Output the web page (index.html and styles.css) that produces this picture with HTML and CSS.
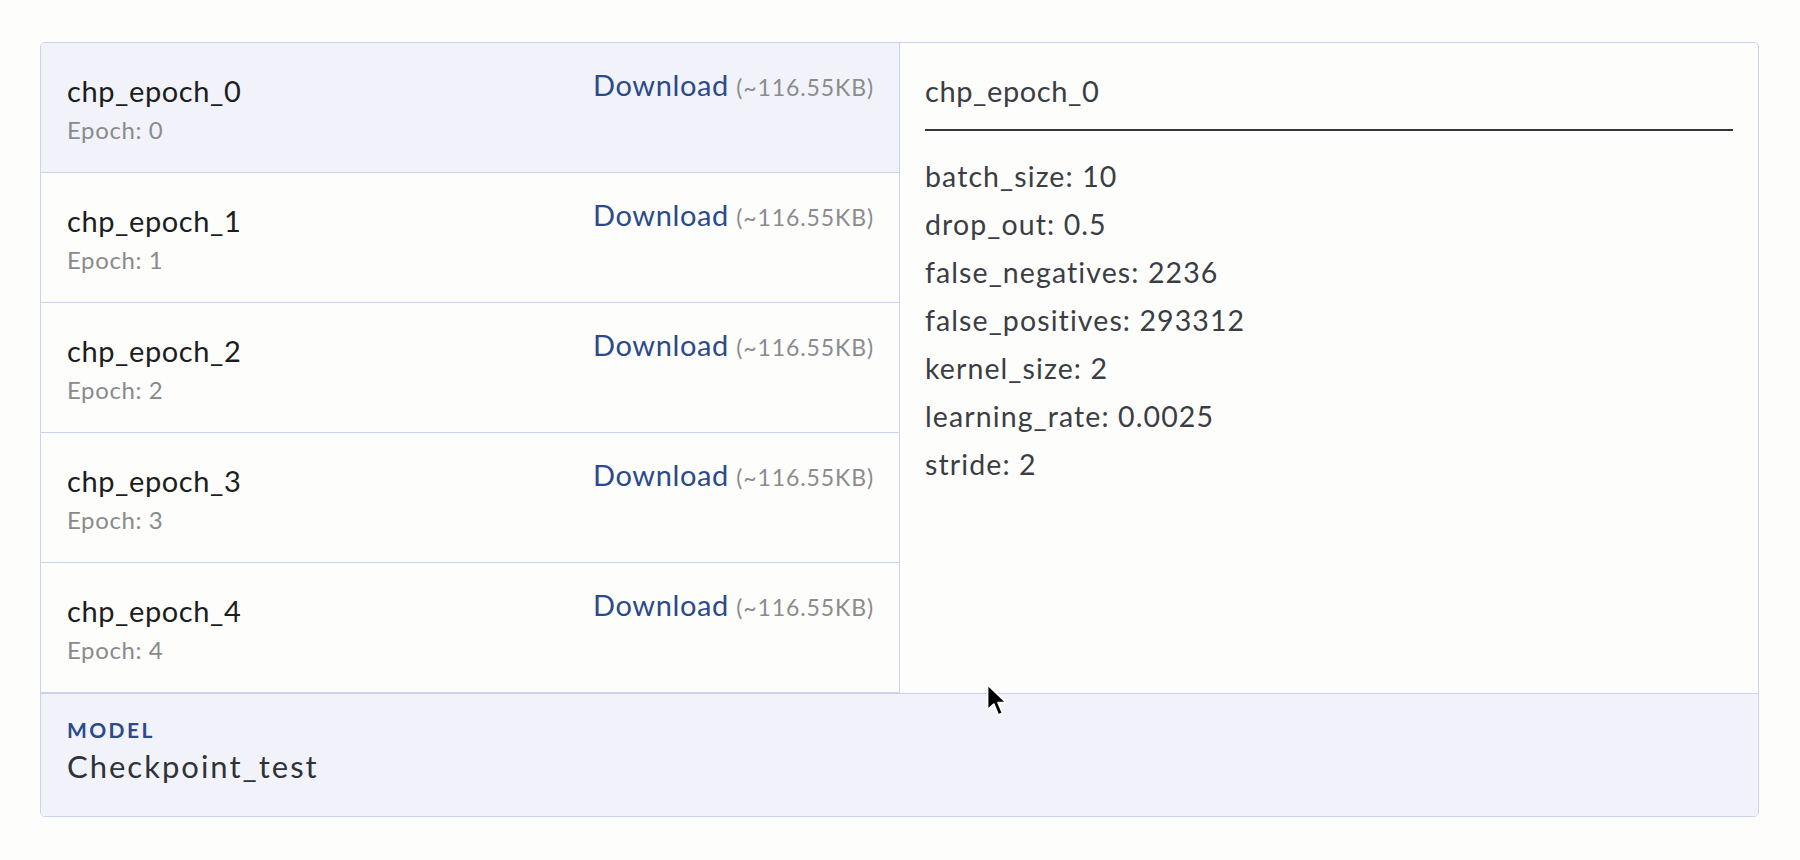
FILE: index.html
```html
<!DOCTYPE html>
<html>
<head>
<meta charset="utf-8">
<link rel="stylesheet" href="styles.css">
</head>
<body>
<div class="card">
  <div class="main">
    <div class="list">
      <div class="row selected">
        <div class="info"><div class="name">chp_epoch_0</div><div class="epoch">Epoch: 0</div></div>
        <div class="dl"><a class="link">Download</a> <span class="size">(~116.55KB)</span></div>
      </div>
      <div class="row">
        <div class="info"><div class="name">chp_epoch_1</div><div class="epoch">Epoch: 1</div></div>
        <div class="dl"><a class="link">Download</a> <span class="size">(~116.55KB)</span></div>
      </div>
      <div class="row">
        <div class="info"><div class="name">chp_epoch_2</div><div class="epoch">Epoch: 2</div></div>
        <div class="dl"><a class="link">Download</a> <span class="size">(~116.55KB)</span></div>
      </div>
      <div class="row">
        <div class="info"><div class="name">chp_epoch_3</div><div class="epoch">Epoch: 3</div></div>
        <div class="dl"><a class="link">Download</a> <span class="size">(~116.55KB)</span></div>
      </div>
      <div class="row">
        <div class="info"><div class="name">chp_epoch_4</div><div class="epoch">Epoch: 4</div></div>
        <div class="dl"><a class="link">Download</a> <span class="size">(~116.55KB)</span></div>
      </div>
    </div>
    <div class="detail">
      <div class="title">chp_epoch_0</div>
      <div class="props">
        <div>batch_size: 10</div>
        <div>drop_out: 0.5</div>
        <div>false_negatives: 2236</div>
        <div>false_positives: 293312</div>
        <div>kernel_size: 2</div>
        <div>learning_rate: 0.0025</div>
        <div>stride: 2</div>
      </div>
    </div>
  </div>
  <div class="footer">
    <div class="label">MODEL</div>
    <div class="model">Checkpoint_test</div>
  </div>
  <svg class="cursor" width="24" height="36" viewBox="0 0 24 36"><path d="M1.5 1.5 L1.5 27 L7.8 21.2 L12.3 32 L16.6 30.2 L12.1 19.7 L20.3 19.7 Z" fill="#000" stroke="#fff" stroke-width="1.8" stroke-linejoin="round"/></svg>
</div>
</body>
</html>
```
FILE: styles.css
```css
html, body {
  margin: 0;
  padding: 0;
  background: #fdfdfb;
  font-family: Lato, "Noto Sans", sans-serif;
}
.card {
  position: relative;
  box-sizing: border-box;
  margin: 42px 0 0 40px;
  width: 1719px;
  border: 1px solid #c9d3ee;
  border-radius: 5px;
  overflow: hidden;
}
.main {
  display: flex;
}
.list {
  width: 858px;
  flex: none;
  border-right: 1px solid #c9d3ee;
}
.row {
  box-sizing: border-box;
  height: 130px;
  display: flex;
  justify-content: space-between;
  align-items: flex-start;
  padding: 24px 25px 0 26px;
  border-bottom: 1px solid #c9d3ee;
}
.row.selected {
  background: #f2f3fa;
}
.info {
  padding-top: 6px;
}
.name {
  font-size: 29px;
  line-height: 36px;
  letter-spacing: 0.6px;
  color: #1c1d20;
}
.epoch {
  font-size: 24px;
  line-height: 36px;
  letter-spacing: 0.6px;
  margin-top: 3px;
  color: #8a8b8d;
}
.dl {
  font-size: 29px;
  line-height: 36px;
  white-space: nowrap;
}
.link {
  color: #2b4a8b;
  letter-spacing: 0.6px;
}
.size {
  font-size: 23px;
  letter-spacing: 0.9px;
  color: #8a8b8d;
}
.detail {
  flex: 1;
  padding: 30px 25px 0 25px;
  color: #3a3e44;
}
.title {
  font-size: 29px;
  line-height: 36px;
  letter-spacing: 0.6px;
  padding-bottom: 20px;
  border-bottom: 2px solid #333538;
}
.props {
  margin-top: 21px;
  font-size: 28.5px;
  line-height: 48px;
  letter-spacing: 1.1px;
}
.footer {
  box-sizing: border-box;
  height: 123px;
  border-top: 1px solid #c9d3ee;
  background: #f2f3fa;
  padding: 23px 26px 0 26px;
}
.label {
  font-size: 21px;
  line-height: 26px;
  font-weight: 700;
  letter-spacing: 2.4px;
  color: #2c4a8c;
}
.model {
  margin-top: 3px;
  font-size: 31px;
  line-height: 40px;
  letter-spacing: 2px;
  color: #2f3337;
}
.cursor {
  position: absolute;
  left: 945px;
  top: 640px;
}
```
